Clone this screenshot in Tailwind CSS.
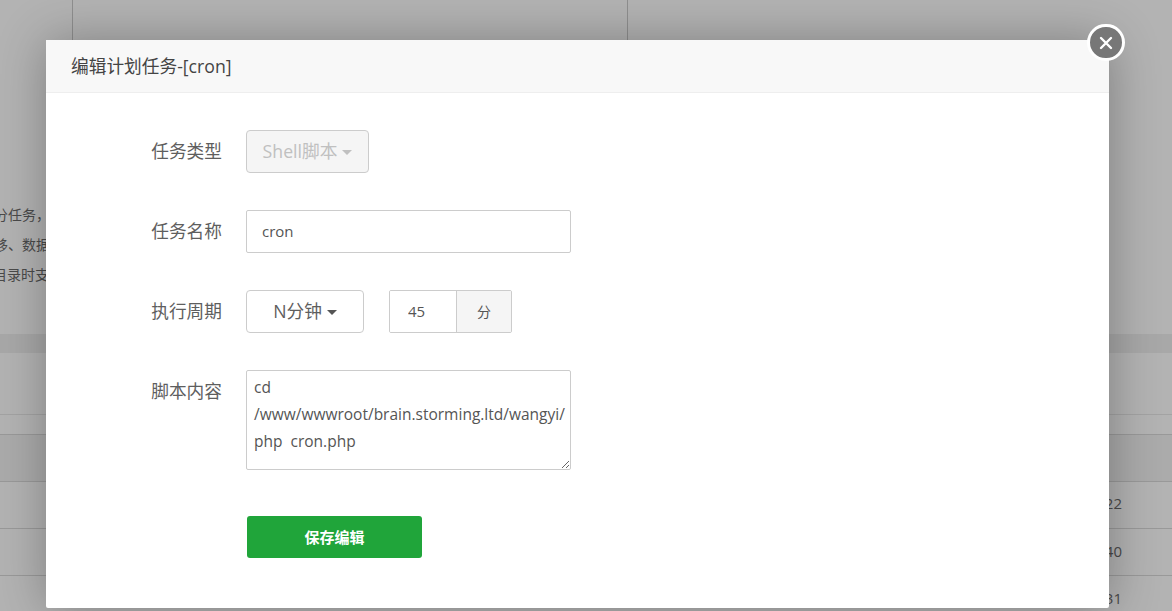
<!DOCTYPE html>
<html lang="zh-CN">
<head>
  <meta charset="UTF-8" />
  <meta name="viewport" content="width=device-width, initial-scale=1" />
  <title>编辑计划任务</title>
  <script src="https://cdn.jsdelivr.net/npm/@tailwindcss/browser@4"></script>
</head>
<body class="bg-[#b3b3b3] overflow-hidden font-['Open_Sans','Noto_Sans_CJK_SC',sans-serif]">
  <div class="relative w-[1172px] h-[611px] overflow-hidden">

    <!-- page behind the overlay -->
    <div class="h-[611px] flex flex-col text-[#4a4a4a]">
      <div class="h-[40px] flex shrink-0">
        <div class="w-[73px] border-r border-[#8f8f8f]"></div>
        <div class="w-[555px] border-r border-[#8f8f8f]"></div>
      </div>
      <div class="h-[294px] pt-[160px] flex flex-col text-[14px] leading-[30px] shrink-0 overflow-hidden">
        <div class="-ml-[20px]">部分任务，</div>
        <div class="-ml-[6px]">移、数据</div>
        <div class="-ml-[7px]">目录时支</div>
      </div>
      <div class="h-[19px] bg-[#a8a8a8] shrink-0"></div>
      <div class="h-[62px] border-b border-[#a3a3a3] shrink-0"></div>
      <div class="h-[20px] border-b border-[#999999] shrink-0"></div>
      <div class="h-[47px] border-b border-[#999999] bg-[#ababab] shrink-0"></div>
      <div class="h-[47px] border-b border-[#999999] shrink-0 flex items-center justify-end pr-[50px] pb-[3px] text-[15px]">22</div>
      <div class="h-[47px] border-b border-[#999999] shrink-0 flex items-center justify-end pr-[50px] pb-[2px] text-[15px]">40</div>
      <div class="h-[47px] shrink-0 flex items-center justify-end pr-[50px] pb-[2px] text-[15px]">31</div>
    </div>

    <!-- modal -->
    <div class="absolute left-[46px] top-[40px] w-[1063px] h-[568px] bg-white rounded-[2px] shadow-[1px_1px_50px_rgba(0,0,0,0.3)]">
      <div class="h-[53px] bg-[#f8f8f8] border-b border-[#eeeeee] pl-[25px] flex items-center text-[17.7px] text-[#444444]">编辑计划任务-[cron]</div>

      <div class="pt-[37px] flex flex-col">
        <div class="flex items-center h-[43px]">
          <label class="w-[176px] text-right text-[17.7px] text-[#5e5e5e]">任务类型</label>
          <button class="ml-[24px] w-[123px] h-[43px] flex items-center justify-center gap-[5px] bg-[#f5f5f5] border border-[#cccccc] rounded-[4px] text-[17.7px] text-[#c0c0c0]">Shell脚本<span class="mt-[2px] border-x-[5px] border-t-[5px] border-x-transparent border-t-[#c0c0c0]"></span></button>
        </div>

        <div class="flex items-center h-[43px] mt-[37px]">
          <label class="w-[176px] text-right text-[17.7px] text-[#5e5e5e]">任务名称</label>
          <input type="text" value="cron" class="ml-[24px] w-[325px] h-[43px] px-[15px] pb-[2px] bg-white border border-[#cccccc] rounded-[2px] text-[15px] text-[#555555]" />
        </div>

        <div class="flex items-center h-[43px] mt-[37px]">
          <label class="w-[176px] text-right text-[17.7px] text-[#5e5e5e]">执行周期</label>
          <button class="ml-[24px] w-[118px] h-[43px] flex items-center justify-center gap-[5px] bg-white border border-[#cccccc] rounded-[4px] text-[17.7px] text-[#5e5e5e]">N分钟<span class="mt-[2px] border-x-[5px] border-t-[5px] border-x-transparent border-t-[#555555]"></span></button>
          <div class="ml-[25px] w-[123px] h-[43px] flex border border-[#cccccc] rounded-[2px] overflow-hidden">
            <input type="text" value="45" class="w-[66px] px-[18px] bg-white text-[15px] text-[#555555]" />
            <span class="flex-1 flex items-center justify-center bg-[#f5f5f5] border-l border-[#cccccc] text-[14px] text-[#555555]">分</span>
          </div>
        </div>

        <div class="flex items-start mt-[37px]">
          <label class="w-[176px] text-right text-[17.7px] leading-[43px] text-[#5e5e5e]">脚本内容</label>
          <textarea class="ml-[24px] w-[325px] h-[100px] pl-[7px] pr-[2px] py-[3px] bg-white border border-[#cccccc] rounded-[2px] text-[15.5px] leading-[27px] text-[#555555]">cd /www/wwwroot/brain.storming.ltd/wangyi/
php  cron.php</textarea>
        </div>

        <div class="pl-[201px] mt-[46px]">
          <button class="w-[175px] h-[42px] bg-[#20a53a] rounded-[3px] text-white text-[15px] font-semibold">保存编辑</button>
        </div>
      </div>
    </div>

    <!-- close button -->
    <button class="absolute left-[1087px] top-[24px] w-[38px] h-[37px] rounded-full bg-[#777777] border-[3px] border-white flex items-center justify-center">
      <svg width="16" height="16" viewBox="0 0 16 16" fill="none" stroke="white" stroke-width="2.4" stroke-linecap="round"><path d="M3 3 13 13M13 3 3 13" /></svg>
    </button>
  </div>
</body>
</html>
